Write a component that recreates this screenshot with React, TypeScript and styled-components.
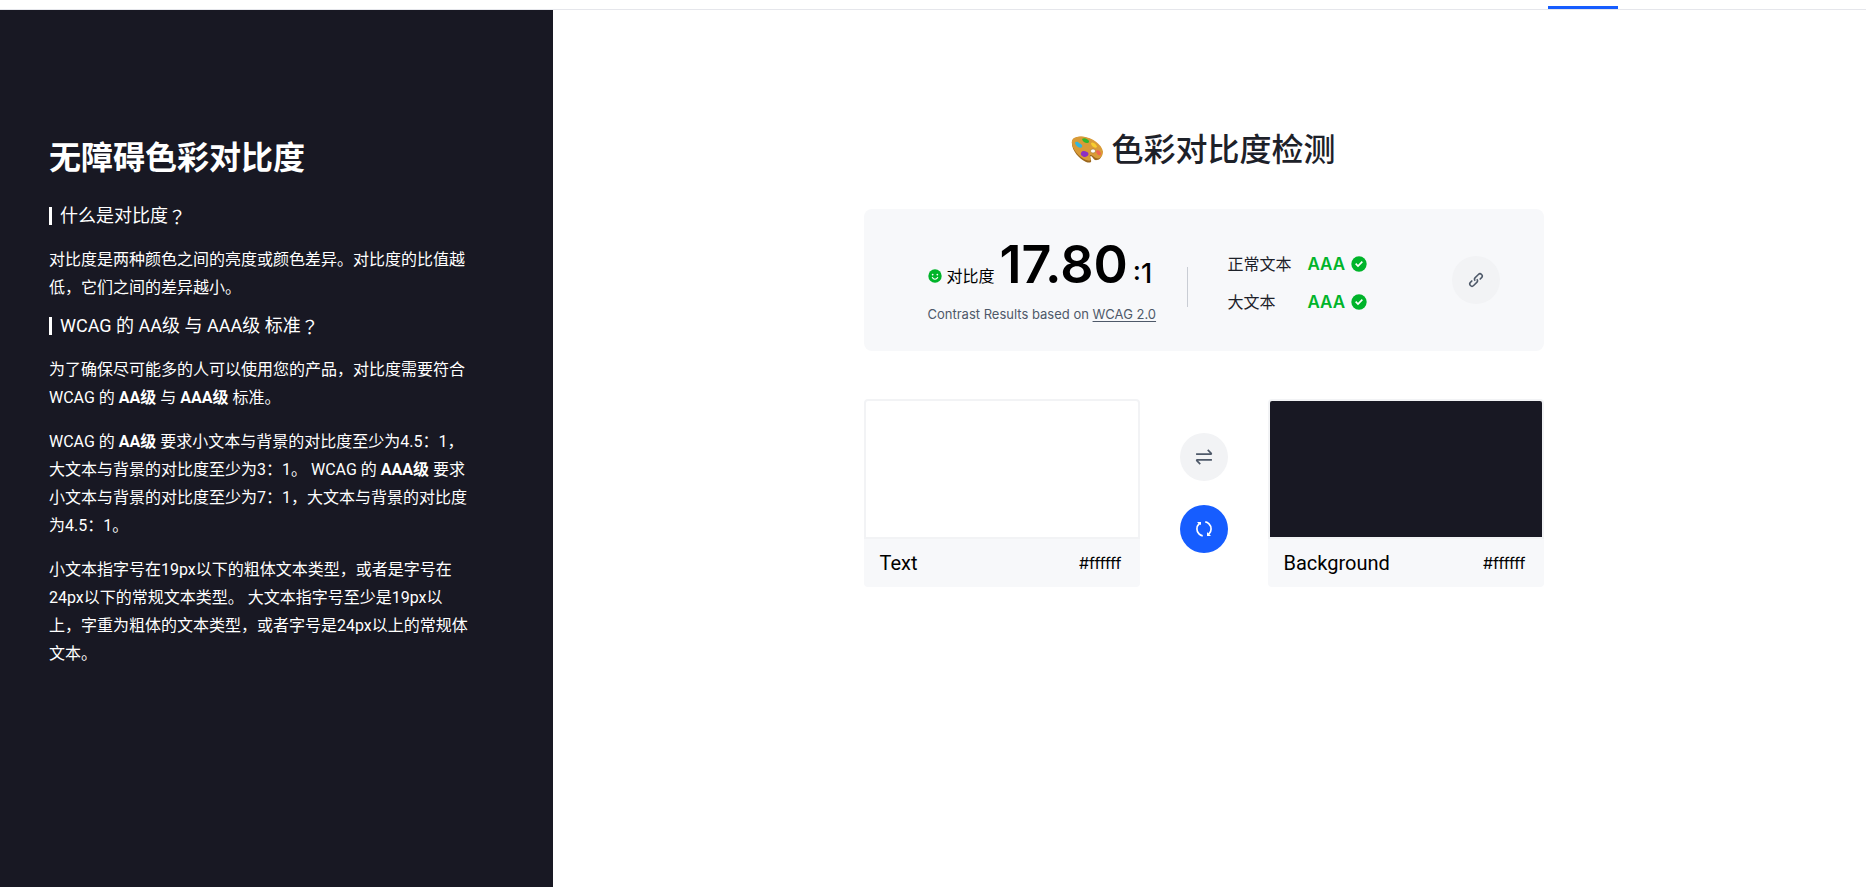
import React, { useState } from "react";
import styled, { createGlobalStyle, css } from "styled-components";

const textFont = `Roboto, "Noto Sans CJK SC", sans-serif`;

const GlobalStyle = createGlobalStyle`
  *, *::before, *::after { box-sizing: border-box; }
  body {
    margin: 0;
    background: #fff;
    color: #1d2129;
    font-family: Inter, "Noto Sans CJK SC", sans-serif;
    font-size: 16px;
  }
  h1, h2, h3, p { margin: 0; }
  button, input { font: inherit; color: inherit; }
`;

const Page = styled.div`
  display: flex;
  flex-direction: column;
  min-height: 100vh;
`;

const Header = styled.header`
  display: flex;
  justify-content: flex-end;
  align-items: flex-end;
  height: 10px;
  padding-right: 248px;
  border-bottom: 1px solid #e5e6eb;
`;

const ActiveTab = styled.span`
  width: 70px;
  height: 3px;
  background: #165dff;
`;

const Body = styled.div`
  display: flex;
  flex: 1;
`;

const Sidebar = styled.aside`
  flex: 0 0 553px;
  padding: 124px 80px 48px 49px;
  background: #181823;
  color: #fff;
  font-family: ${textFont};
`;

const SidebarTitle = styled.h1`
  font-size: 32px;
  line-height: 48px;
  font-weight: 600;
`;

const Question = styled.h2`
  display: flex;
  align-items: center;
  margin-top: 10px;
  font-size: 18px;
  line-height: 28px;
  font-weight: 400;

  &::before {
    content: "";
    width: 3px;
    height: 18px;
    margin-right: 8px;
    background: #fff;
  }

  ${SidebarTitle} + & {
    margin-top: 20px;
  }
`;

const QuestionMark = styled.span`
  font-family: "Noto Sans CJK TC", sans-serif;
`;

const Paragraph = styled.p`
  margin-top: 16px;
  line-height: 28px;
`;

const Main = styled.main`
  display: flex;
  flex: 1;
  flex-direction: column;
  align-items: center;
  padding: 116px 12px 48px 0;
`;

const MainTitle = styled.h2`
  display: flex;
  align-items: center;
  gap: 8px;
  font-size: 32px;
  line-height: 48px;
  font-weight: 500;
`;

const Content = styled.div`
  width: 100%;
  max-width: 680px;
`;

const ResultCard = styled.section`
  display: flex;
  align-items: center;
  height: 142px;
  margin-top: 35px;
  padding: 0 44px 0 64px;
  border-radius: 8px;
  background: #f7f8fa;
`;

const Score = styled.div`
  display: flex;
  flex: 0 0 224px;
  flex-direction: column;
  gap: 2px;
  min-width: 0;
  white-space: nowrap;
`;

const ScoreRow = styled.div`
  display: flex;
  align-items: baseline;
  gap: 5px;
  color: #000;
  line-height: 56px;
`;

const ScoreLabel = styled.span`
  display: inline-flex;
  align-items: center;
  gap: 5px;
  line-height: 24px;
`;

const Ratio = styled.strong`
  font-size: 52px;
  font-weight: 600;
`;

const RatioUnit = styled.span`
  font-size: 27px;
  font-weight: 500;
`;

const Note = styled.p`
  color: #4e5969;
  font-size: 13px;
  line-height: 20px;

  a { color: inherit; text-underline-offset: 2px; }
`;

const Divider = styled.span`
  width: 1px;
  height: 40px;
  margin: 14px 40px 0 35px;
  background: #c9cdd4;
`;

const Levels = styled.dl`
  display: grid;
  grid-template-columns: 64px auto;
  gap: 14px 16px;
  margin: 5px auto 0 0;
  line-height: 24px;

  dt { margin: 0; }
`;

const Level = styled.dd`
  display: flex;
  align-items: center;
  gap: 6px;
  margin: 0;
  color: #00b42a;
  font-size: 17px;
  font-weight: 600;
`;

const RoundButton = styled.button<{ $primary?: boolean }>`
  display: flex;
  align-items: center;
  justify-content: center;
  width: 48px;
  height: 48px;
  padding: 0;
  border: 0;
  border-radius: 50%;
  background: #f2f3f5;
  color: #4e5969;
  cursor: pointer;
  ${(p) => p.$primary && css`background: #165dff; color: #fff;`}
`;

const Pickers = styled.section`
  display: flex;
  align-items: center;
  gap: 40px;
  margin-top: 48px;
`;

const Actions = styled.div`
  display: flex;
  flex-direction: column;
  gap: 24px;
`;

const Picker = styled.div`
  flex: 1;
  min-width: 0;
  border-radius: 4px;
  background: #f7f8fa;
  overflow: hidden;
  color: #000;
  font-family: ${textFont};
`;

const Swatch = styled.button<{ $color: string }>`
  display: block;
  width: 100%;
  height: 140px;
  padding: 0;
  border: 2px solid #f2f3f5;
  border-radius: 4px 4px 0 0;
  background: ${(p) => p.$color};
  cursor: pointer;
`;

const PickerFooter = styled.div`
  display: flex;
  align-items: center;
  justify-content: space-between;
  height: 48px;
  padding: 0 18px 0 16px;
`;

const PickerLabel = styled.label`
  font-size: 20px;
`;

const HexInput = styled.input`
  width: 80px;
  padding: 0;
  border: 0;
  background: transparent;
  font-family: Inter, sans-serif;
  text-align: right;
`;

const iconBase = { fill: "none", stroke: "currentColor", strokeWidth: 4, viewBox: "0 0 48 48", "aria-hidden": true } as const;

const SmileIcon = () => (
  <svg width="14" height="14" viewBox="0 0 48 48" aria-hidden="true">
    <circle cx="24" cy="24" r="23" fill="#00b42a" />
    <circle cx="16" cy="19" r="3" fill="#fff" />
    <circle cx="32" cy="19" r="3" fill="#fff" />
    <path d="M15 29c4 8 14 8 18 0" fill="none" stroke="#fff" strokeWidth="4" strokeLinecap="round" />
  </svg>
);

const CheckIcon = () => (
  <svg width="16" height="16" viewBox="0 0 48 48" aria-hidden="true">
    <circle cx="24" cy="24" r="23" fill="#00b42a" />
    <path d="M14 23l7 7 13-13" fill="none" stroke="#fff" strokeWidth="5" />
  </svg>
);

const LinkIcon = () => (
  <svg {...iconBase} width="18" height="18">
    <path d="m14.1 25.414-4.95 4.95a6 6 0 0 0 8.486 8.485l8.485-8.485a6 6 0 0 0 0-8.485m7.779.707 4.95-4.95a6 6 0 1 0-8.486-8.485l-8.485 8.485a6 6 0 0 0 0 8.485" />
  </svg>
);

const SwapIcon = () => (
  <svg {...iconBase} width="20" height="20">
    <path d="M5 17h35.586c.89 0 1.337-1.077.707-1.707L33 7M43 31H7.414c-.89 0-1.337 1.077-.707 1.707L15 41" />
  </svg>
);

const SyncIcon = () => (
  <svg {...iconBase} width="20" height="20">
    <path d="M11.98 11.703c-6.64 6.64-6.64 17.403 0 24.042a16.92 16.92 0 0 0 8.942 4.7M34.603 37.156l1.414-1.415c6.64-6.639 6.64-17.402 0-24.041A16.92 16.92 0 0 0 27.075 7M14.81 11.982l-1.414-1.414-1.414-1.414h2.829v2.828ZM33.192 36.02l1.414 1.414 1.414 1.415h-2.828V36.02Z" />
  </svg>
);

const PaletteIcon = () => (
  <svg width="32" height="32" viewBox="0 0 32 32" aria-hidden="true">
    <path d="M1 10C0 5 5 2 12 3c9 1 18 8 19 15 0 5-2 8-5 8-3 1-4-3-6-4-1 0-1 2 0 4 1 3-2 3-5 2C8 25 1 16 1 10Z" fill="#9b671e" />
    <path d="M1 9C0 4 5 2 12 2.500c9 1 19 8 20 15 0 4-2 7-5 7-3 0-5-3-7-3.500-2 0-1 2 0 4 0 2-2 2-5 1C8 23 1 15 1 9Z" fill="#d99b37" />
    <ellipse cx="22" cy="17" rx="2.500" ry="2" fill="#fff" stroke="#9b671e" strokeWidth=".5" />
    <path d="M4 9c1-2 3-1 4 0 2 1 4 2 3 4-1 2-6 0-7-4Z" fill="#31b6dd" />
    <path d="M11 5c2-2 6 0 7 2 1 3-6 3-7-2Z" fill="#31b72c" />
    <path d="M20 9c2-2 6 2 6 4-2 2-6-1-6-4Z" fill="#f7ce2e" />
    <path d="M10 19c1-3 4-2 6-1 3 1 1 5-2 5-2 0-5-2-4-4Z" fill="#8d2fc4" />
    <path d="M25 17c2-2 5 1 5 3-1 3-5 0-5-3Z" fill="#ef6253" />
  </svg>
);

function ColorPicker({ id, label, color }: { id: string; label: string; color: string }) {
  const [hex, setHex] = useState("#ffffff");
  return (
    <Picker>
      <Swatch type="button" $color={color} aria-label={label} />
      <PickerFooter>
        <PickerLabel htmlFor={id}>{label}</PickerLabel>
        <HexInput id={id} value={hex} onChange={(e) => setHex(e.target.value)} />
      </PickerFooter>
    </Picker>
  );
}

export default function App() {
  return (
    <Page lang="zh-CN">
      <GlobalStyle />
      <Header>
        <ActiveTab />
      </Header>
      <Body>
        <Sidebar>
          <SidebarTitle>无障碍色彩对比度</SidebarTitle>
          <Question>
            什么是对比度<QuestionMark lang="zh-TW">？</QuestionMark>
          </Question>
          <Paragraph>对比度是两种颜色之间的亮度或颜色差异。对比度的比值越低，它们之间的差异越小。</Paragraph>
          <Question>
            WCAG 的 AA级 与 AAA级 标准<QuestionMark lang="zh-TW">？</QuestionMark>
          </Question>
          <Paragraph>
            为了确保尽可能多的人可以使用您的产品，对比度需要符合 WCAG 的 <b>AA级</b> 与 <b>AAA级</b> 标准。
          </Paragraph>
          <Paragraph>
            WCAG 的 <b>AA级</b> 要求小文本与背景的对比度至少为4.5：1，大文本与背景的对比度至少为3：1。 WCAG 的 <b>AAA级</b>{" "}
            要求小文本与背景的对比度至少为7：1，大文本与背景的对比度为4.5：1。
          </Paragraph>
          <Paragraph>
            小文本指字号在19px以下的粗体文本类型，或者是字号在24px以下的常规文本类型。 大文本指字号至少是19px以上，字重为粗体的文本类型，或者字号是24px以上的常规体文本。
          </Paragraph>
        </Sidebar>
        <Main>
          <MainTitle>
            <PaletteIcon />
            色彩对比度检测
          </MainTitle>
          <Content>
            <ResultCard>
              <Score>
                <ScoreRow>
                  <ScoreLabel>
                    <SmileIcon />
                    对比度
                  </ScoreLabel>
                  <Ratio>17.80</Ratio>
                  <RatioUnit>:1</RatioUnit>
                </ScoreRow>
                <Note>
                  Contrast Results based on <a href="#wcag">WCAG 2.0</a>
                </Note>
              </Score>
              <Divider />
              <Levels>
                <dt>正常文本</dt>
                <Level>
                  AAA <CheckIcon />
                </Level>
                <dt>大文本</dt>
                <Level>
                  AAA <CheckIcon />
                </Level>
              </Levels>
              <RoundButton type="button" aria-label="复制链接">
                <LinkIcon />
              </RoundButton>
            </ResultCard>
            <Pickers>
              <ColorPicker id="text-color" label="Text" color="#ffffff" />
              <Actions>
                <RoundButton type="button" aria-label="交换颜色">
                  <SwapIcon />
                </RoundButton>
                <RoundButton type="button" aria-label="随机颜色" $primary>
                  <SyncIcon />
                </RoundButton>
              </Actions>
              <ColorPicker id="background-color" label="Background" color="#181823" />
            </Pickers>
          </Content>
        </Main>
      </Body>
    </Page>
  );
}
